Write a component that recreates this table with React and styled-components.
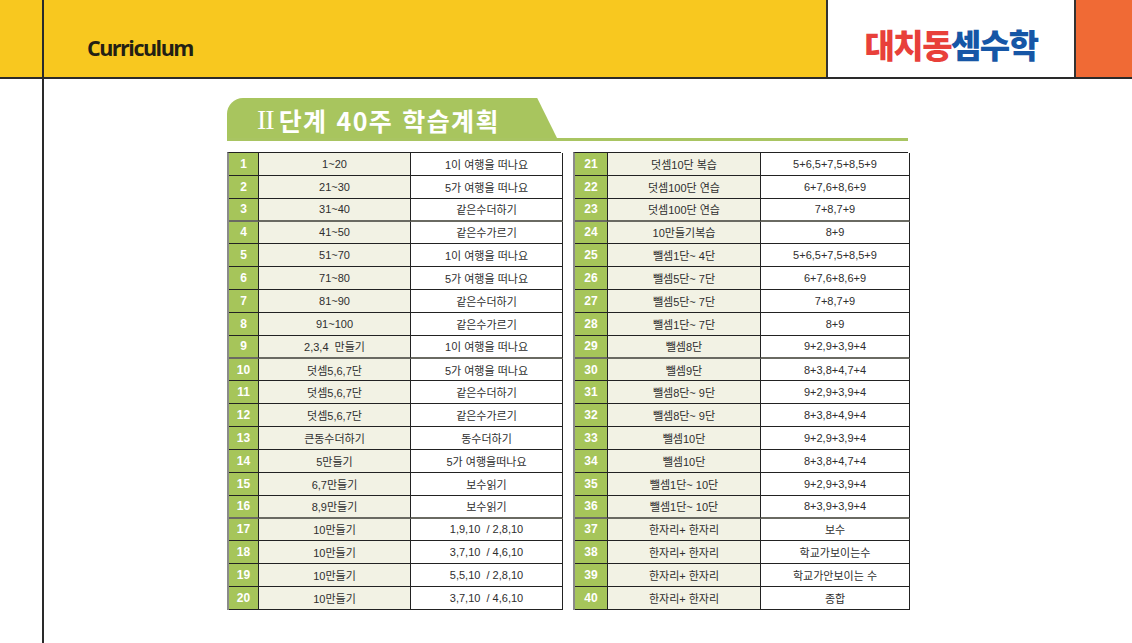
import React from "react";
import styled, { createGlobalStyle } from "styled-components";

const GlobalStyle = createGlobalStyle`
  html, body {
    margin: 0;
    padding: 0;
    background: #ffffff;
    font-family: "Liberation Sans", "Noto Sans CJK KR", sans-serif;
  }
  #root {
    width: 1132px;
    height: 643px;
    overflow: hidden;
  }
`;

const leftRows = [
  ["1~20", "1이 여행을 떠나요"],
  ["21~30", "5가 여행을 떠나요"],
  ["31~40", "같은수더하기", true],
  ["41~50", "같은수가르기"],
  ["51~70", "1이 여행을 떠나요"],
  ["71~80", "5가 여행을 떠나요"],
  ["81~90", "같은수더하기"],
  ["91~100", "같은수가르기"],
  ["2,3,4  만들기", "1이 여행을 떠나요", true],
  ["덧셈5,6,7단", "5가 여행을 떠나요"],
  ["덧셈5,6,7단", "같은수더하기"],
  ["덧셈5,6,7단", "같은수가르기"],
  ["큰동수더하기", "동수더하기"],
  ["5만들기", "5가 여행을떠나요"],
  ["6,7만들기", "보수읽기"],
  ["8,9만들기", "보수읽기", true],
  ["10만들기", "1,9,10  / 2,8,10"],
  ["10만들기", "3,7,10  / 4,6,10"],
  ["10만들기", "5,5,10  / 2,8,10"],
  ["10만들기", "3,7,10  / 4,6,10"],
];

const rightRows = [
  ["덧셈10단 복습", "5+6,5+7,5+8,5+9"],
  ["덧셈100단 연습", "6+7,6+8,6+9"],
  ["덧셈100단 연습", "7+8,7+9", true],
  ["10만들기복습", "8+9"],
  ["뺄셈1단~ 4단", "5+6,5+7,5+8,5+9"],
  ["뺄셈5단~ 7단", "6+7,6+8,6+9"],
  ["뺄셈5단~ 7단", "7+8,7+9"],
  ["뺄셈1단~ 7단", "8+9"],
  ["뺄셈8단", "9+2,9+3,9+4", true],
  ["뺄셈9단", "8+3,8+4,7+4"],
  ["뺄셈8단~ 9단", "9+2,9+3,9+4"],
  ["뺄셈8단~ 9단", "8+3,8+4,9+4"],
  ["뺄셈10단", "9+2,9+3,9+4"],
  ["뺄셈10단", "8+3,8+4,7+4"],
  ["뺄셈1단~ 10단", "9+2,9+3,9+4"],
  ["뺄셈1단~ 10단", "8+3,9+3,9+4", true],
  ["한자리+ 한자리", "보수"],
  ["한자리+ 한자리", "학교가보이는수"],
  ["한자리+ 한자리", "학교가안보이는 수"],
  ["한자리+ 한자리", "종합"],
];

export default function App() {
  return (
    <>
      <GlobalStyle />
      <Page>
        <GutterTop />
        <Header>
          <Brand>Curriculum</Brand>
          <LogoBox>
            <LogoRed>대치동</LogoRed>
            <LogoBlue>셈수학</LogoBlue>
          </LogoBox>
          <Corner />
        </Header>
        <Gutter />
        <Content>
          <TitleRow>
            <TitleTab>
              <Roman>II</Roman>
              <TitleText>단계 40주 학습계획</TitleText>
            </TitleTab>
          </TitleRow>
          <Tables>
            <PlanTable rows={leftRows} start={1} cols="30px 152px 152px" />
            <PlanTable rows={rightRows} start={21} cols="33px 153px 149px" />
          </Tables>
        </Content>
      </Page>
    </>
  );
}

function PlanTable({ rows, start, cols }) {
  return (
    <Table $cols={cols}>
      {rows.map(([topic, detail, heavy], i) => (
        <React.Fragment key={i}>
          <NumCell $heavy={heavy}>{start + i}</NumCell>
          <TopicCell $heavy={heavy}>{topic}</TopicCell>
          <DetailCell $heavy={heavy}>{detail}</DetailCell>
        </React.Fragment>
      ))}
    </Table>
  );
}

const Page = styled.div`
  display: grid;
  grid-template-columns: 44px 1fr;
  grid-template-rows: 79px 1fr;
  width: 1132px;
  height: 643px;
`;

const GutterTop = styled.div`
  background: #f8c81f;
  border-right: 2px solid #2a2a2a;
  border-bottom: 2px solid #2a2a2a;
`;

const Gutter = styled.div`
  border-right: 2px solid #2a2a2a;
`;

const Header = styled.div`
  display: flex;
  align-items: stretch;
  background: #f8c81f;
  border-bottom: 2px solid #2a2a2a;
`;

const Brand = styled.div`
  flex: 1;
  padding: 33px 0 0 43px;
  font-family: "Open Sans", "Liberation Sans", sans-serif;
  font-weight: 700;
  font-size: 21.5px;
  letter-spacing: -1.5px;
  color: #231f14;
`;

const LogoBox = styled.div`
  width: 250px;
  display: flex;
  align-items: center;
  justify-content: center;
  padding-top: 10px;
  box-sizing: border-box;
  background: #ffffff;
  border-left: 2px solid #333333;
  border-right: 2px solid #333333;
  font-family: "Noto Sans CJK KR", sans-serif;
  font-weight: 900;
  font-size: 33px;
  letter-spacing: -1.5px;
`;

const LogoRed = styled.span`
  color: #e8403a;
`;

const LogoBlue = styled.span`
  color: #1656a6;
`;

const Corner = styled.div`
  width: 56px;
  background: #f06a35;
`;

const Content = styled.div`
  padding: 19px 0 0 183px;
`;

const TitleRow = styled.div`
  width: 681px;
  border-bottom: 3px solid #a9c562;
`;

const TitleTab = styled.div`
  width: 330px;
  height: 40px;
  box-sizing: border-box;
  padding: 4px 0 0 30px;
  display: flex;
  align-items: center;
  gap: 5px;
  background: #a8c55e;
  border-top-left-radius: 16px;
  clip-path: polygon(0 0, 94% 0, 100% 100%, 0 100%);
  color: #ffffff;
`;

const Roman = styled.span`
  font-family: "Liberation Serif", serif;
  font-size: 28px;
  letter-spacing: -1px;
  line-height: 1;
`;

const TitleText = styled.span`
  font-family: "Noto Sans CJK KR", sans-serif;
  font-weight: 700;
  font-size: 25px;
  letter-spacing: 1.4px;
  line-height: 1;
  word-spacing: 2px;
`;

const Tables = styled.div`
  display: grid;
  grid-template-columns: 334px 335px;
  column-gap: 12px;
  margin-top: 11px;
`;

const Table = styled.div`
  display: grid;
  grid-template-columns: ${(p) => p.$cols};
  grid-auto-rows: 22.85px;
  border-top: 1px solid #222222;
  border-left: 2px solid #8a8a8a;
`;

const Cell = styled.div`
  display: flex;
  align-items: center;
  justify-content: center;
  box-sizing: border-box;
  border-right: 1px solid #222222;
  border-bottom: ${(p) => (p.$heavy ? "2px solid #6a6a62" : "1px solid #222222")};
  font-size: 11px;
  color: #2e2e2e;
  white-space: pre;
  overflow: hidden;
`;

const NumCell = styled(Cell)`
  background: #a6c55a;
  color: #ffffff;
  font-weight: 700;
  font-size: 12px;
`;

const TopicCell = styled(Cell)`
  background: #f2f2e4;
`;

const DetailCell = styled(Cell)`
  background: #ffffff;
`;
